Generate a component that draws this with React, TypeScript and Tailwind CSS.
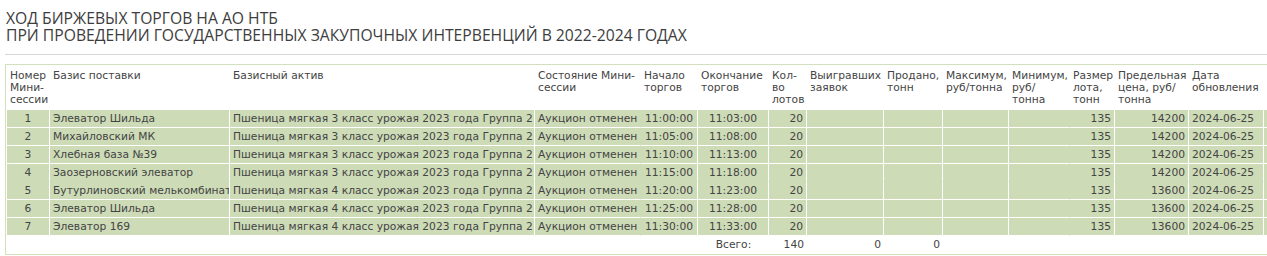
import React from "react";

type Col = {
  w: number;
  head: string[];
  align: "left" | "center" | "right";
  line: boolean;
};

const cols: Col[] = [
  { w: 43, head: ["Номер", "Мини-", "сессии"], align: "center", line: true },
  { w: 180, head: ["Базис поставки"], align: "left", line: true },
  { w: 305, head: ["Базисный актив"], align: "left", line: true },
  { w: 106, head: ["Состояние Мини-", "сессии"], align: "left", line: false },
  { w: 57, head: ["Начало", "торгов"], align: "center", line: true },
  { w: 71, head: ["Окончание", "торгов"], align: "center", line: true },
  { w: 38, head: ["Кол-", "во", "лотов"], align: "right", line: true },
  { w: 77, head: ["Выигравших", "заявок"], align: "right", line: true },
  { w: 59, head: ["Продано,", "тонн"], align: "right", line: true },
  { w: 66, head: ["Максимум,", "руб/тонна"], align: "right", line: true },
  { w: 61, head: ["Минимум,", "руб/", "тонна"], align: "right", line: false },
  { w: 45, head: ["Размер", "лота,", "тонн"], align: "right", line: true },
  { w: 74, head: ["Предельная", "цена, руб/", "тонна"], align: "right", line: true },
  { w: 75, head: ["Дата", "обновления"], align: "left", line: true },
  { w: 80, head: ["Время", "обновления"], align: "left", line: true },
];

const wheat3 = "Пшеница мягкая 3 класс урожая 2023 года Группа 2";
const wheat4 = "Пшеница мягкая 4 класс урожая 2023 года Группа 2";
const cancelled = "Аукцион отменен";

const rows: string[][] = [
  ["1", "Элеватор Шильда", wheat3, cancelled, "11:00:00", "11:03:00", "20", "", "", "", "", "135", "14200", "2024-06-25", "10:12:41"],
  ["2", "Михайловский МК", wheat3, cancelled, "11:05:00", "11:08:00", "20", "", "", "", "", "135", "14200", "2024-06-25", "10:12:41"],
  ["3", "Хлебная база №39", wheat3, cancelled, "11:10:00", "11:13:00", "20", "", "", "", "", "135", "14200", "2024-06-25", "10:12:41"],
  ["4", "Заозерновский элеватор", wheat3, cancelled, "11:15:00", "11:18:00", "20", "", "", "", "", "135", "14200", "2024-06-25", "10:12:41"],
  ["5", "Бутурлиновский мелькомбинат", wheat4, cancelled, "11:20:00", "11:23:00", "20", "", "", "", "", "135", "13600", "2024-06-25", "10:12:41"],
  ["6", "Элеватор Шильда", wheat4, cancelled, "11:25:00", "11:28:00", "20", "", "", "", "", "135", "13600", "2024-06-25", "10:12:41"],
  ["7", "Элеватор 169", wheat4, cancelled, "11:30:00", "11:33:00", "20", "", "", "", "", "135", "13600", "2024-06-25", "10:12:41"],
];

const totals: string[] = ["", "", "", "", "", "Всего:", "140", "0", "0", "", "", "", "", "", ""];

const alignClass = {
  left: "text-left",
  center: "text-center",
  right: "text-right",
};

function App() {
  const tableWidth = cols.reduce((s, c) => s + c.w, 0);
  return (
    <div className="w-[1267px] h-[256px] overflow-hidden bg-white">
      <div className="pl-[6px] pt-[10px] text-[#3d3d3d] text-[15.7px] leading-[16.5px] font-['Open_Sans',sans-serif]">
        <div>ХОД БИРЖЕВЫХ ТОРГОВ НА АО НТБ</div>
        <div>ПРИ ПРОВЕДЕНИИ ГОСУДАРСТВЕННЫХ ЗАКУПОЧНЫХ ИНТЕРВЕНЦИЙ В 2022-2024 ГОДАХ</div>
      </div>
      <div className="ml-[5px] mt-[11px] h-px w-[1300px] bg-[#d6d6d6]" />
      <div className="ml-[5px] mt-[9px] w-[1300px] border border-[#d2e0bd] pl-[1px] pb-[1px]">
        <table
          className="table-fixed border-separate border-spacing-0 text-[10.7px] text-[#444] font-['DejaVu_Sans','Verdana',sans-serif]"
          style={{ width: tableWidth }}
        >
          <colgroup>
            {cols.map((c, i) => (
              <col key={i} style={{ width: c.w }} />
            ))}
          </colgroup>
          <thead>
            <tr>
              {cols.map((c, i) => (
                <th
                  key={i}
                  className="h-[44px] align-top text-left font-normal whitespace-nowrap overflow-hidden pl-[3px] pt-[5px] pb-[3px] leading-[12px] border-b border-white"
                >
                  {c.head.map((h, j) => (
                    <div key={j}>{h}</div>
                  ))}
                </th>
              ))}
            </tr>
          </thead>
          <tbody>
            {rows.map((r, ri) => (
              <tr key={ri}>
                {r.map((v, ci) => (
                  <td
                    key={ci}
                    className={clsxLite(
                      "h-[18px] leading-[17px] px-[3px] whitespace-nowrap overflow-hidden bg-[#cddbb7] border-b",
                      ri === 3 ? "border-[#cddbb7]" : "border-white",
                      alignClass[cols[ci].align],
                      cols[ci].line ? "border-r border-r-white" : "border-r border-r-[#cddbb7]"
                    )}
                  >
                    {v}
                  </td>
                ))}
              </tr>
            ))}
            <tr>
              {totals.map((v, ci) => (
                <td
                  key={ci}
                  className={clsxLite(
                    "h-[17px] leading-[17px] px-[3px] whitespace-nowrap",
                    ci === 5 ? "text-center" : "text-right"
                  )}
                >
                  {v}
                </td>
              ))}
            </tr>
          </tbody>
        </table>
      </div>
    </div>
  );
}

function clsxLite(...parts: string[]) {
  return parts.filter(Boolean).join(" ");
}

export default App;
